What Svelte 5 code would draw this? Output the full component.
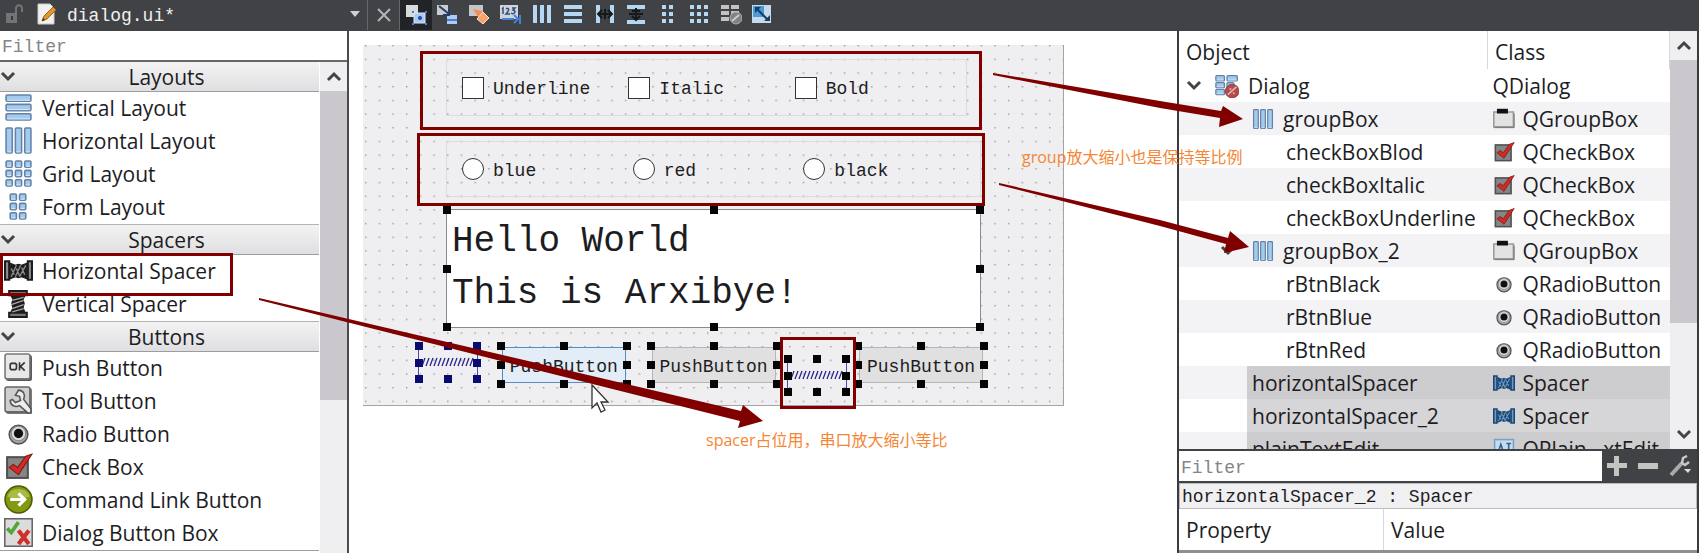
<script lang="ts">
  type Widget = { icon: string; label: string };
  type ObjectRow = {
    name: string;
    cls: string;
    level: number;
    icon?: string;
    clsIcon?: string;
    open?: boolean;
    selected?: boolean;
  };

  const tools = [
    "edit-widgets",
    "edit-signals",
    "edit-buddies",
    "edit-tabs",
    "hlayout",
    "vlayout",
    "hsplit",
    "vsplit",
    "form",
    "grid",
    "break",
    "adjust",
  ];

  const sections: { title: string; widgets: Widget[] }[] = [
    {
      title: "Layouts",
      widgets: [
        { icon: "vlayout", label: "Vertical Layout" },
        { icon: "hlayout", label: "Horizontal Layout" },
        { icon: "grid", label: "Grid Layout" },
        { icon: "form", label: "Form Layout" },
      ],
    },
    {
      title: "Spacers",
      widgets: [
        { icon: "hspacer", label: "Horizontal Spacer" },
        { icon: "vspacer", label: "Vertical Spacer" },
      ],
    },
    {
      title: "Buttons",
      widgets: [
        { icon: "push", label: "Push Button" },
        { icon: "tool", label: "Tool Button" },
        { icon: "radio", label: "Radio Button" },
        { icon: "check", label: "Check Box" },
        { icon: "command", label: "Command Link Button" },
        { icon: "dialogbox", label: "Dialog Button Box" },
      ],
    },
  ];

  const objects: ObjectRow[] = [
    { name: "Dialog", cls: "QDialog", level: 0, icon: "dialog", open: true },
    { name: "groupBox", cls: "QGroupBox", level: 1, icon: "hlayout", clsIcon: "group" },
    { name: "checkBoxBlod", cls: "QCheckBox", level: 2, clsIcon: "check" },
    { name: "checkBoxItalic", cls: "QCheckBox", level: 2, clsIcon: "check" },
    { name: "checkBoxUnderline", cls: "QCheckBox", level: 2, clsIcon: "check" },
    { name: "groupBox_2", cls: "QGroupBox", level: 1, icon: "hlayout", clsIcon: "group", open: true },
    { name: "rBtnBlack", cls: "QRadioButton", level: 2, clsIcon: "radio" },
    { name: "rBtnBlue", cls: "QRadioButton", level: 2, clsIcon: "radio" },
    { name: "rBtnRed", cls: "QRadioButton", level: 2, clsIcon: "radio" },
    { name: "horizontalSpacer", cls: "Spacer", level: 3, clsIcon: "bluespacer", selected: true },
    { name: "horizontalSpacer_2", cls: "Spacer", level: 3, clsIcon: "bluespacer", selected: true },
    { name: "plainTextEdit", cls: "QPlain...xtEdit", level: 3, clsIcon: "textedit", selected: true },
  ];

  const handles = ["nw", "n", "ne", "w", "e", "sw", "s", "se"];
  const text = "Hello World\nThis is Arxibye!";
</script>

{#snippet bars(rects: number[][])}
  {#each rects as [x, y, w, h]}
    <rect {x} {y} width={w} height={h} rx="1" fill="#a3cbef" stroke="#6482a5" stroke-width="1.5" />
    <path d="M{x + 1} {y + h - 1}h{w - 2}" stroke="#d5e8f8" />
  {/each}
{/snippet}

{#snippet icon(name: string)}
  <svg class="icon" viewBox="0 0 28 28" fill="none" aria-hidden="true">
    {#if name === "vlayout"}
      {@render bars([[2, 2, 24, 6], [2, 11, 24, 6], [2, 20, 24, 6]])}
    {:else if name === "hlayout"}
      {@render bars([[2, 2, 6, 24], [11, 2, 6, 24], [20, 2, 6, 24]])}
    {:else if name === "grid"}
      {@render bars([2, 11, 20].flatMap((y) => [2, 11, 20].map((x) => [x, y, 6, 6])))}
    {:else if name === "form"}
      {@render bars([2, 11, 20].flatMap((y) => [6, 15].map((x) => [x, y, 6, 6])))}
    {:else if name === "hspacer" || name === "bluespacer"}
      {@const dark = name === "hspacer" ? "#1c1c1c" : "#1d4673"}
      {@const light = name === "hspacer" ? "#8e8e8e" : "#6b9cc9"}
      <path d="M1 5h4v18H1zM23 5h4v18h-4z" fill={light} stroke={dark} stroke-width="2" />
      <path d="M6 7l5 2 3-1 3 1 5-2v15l-5-2-3 1-3-1-5 2z" fill={dark} stroke={dark} />
      <path d="M7 20l5-11M11 20l5-11M15 20l6-11M7 12l3 6M12 12l3 7M17 11l3 7" stroke={light} stroke-width="1.3" />
    {:else if name === "vspacer"}
      <path d="M5 2h17v4H5zM5 23h17v4H5z" fill="#777" stroke="#1c1c1c" stroke-width="2" />
      <path d="M6 6h15l-2 4 1 4-1 4 2 5H6l2-5-1-4 1-4z" fill="#1c1c1c" />
      <path d="M8 11l11-3M7 15l12-4M8 19l11-4M8 22l11-3" stroke="#aaa" stroke-width="1.3" />
    {:else if name === "push"}
      <rect x="2" y="2" width="25" height="25" rx="2" fill="#555" />
      <rect x="1" y="1" width="24" height="24" rx="2" fill="#e8e8e8" stroke="#777" stroke-width="1.5" />
      <path d="M7 10h4l1 1v4l-1 1H7l-1-1v-4zM15 9v8M20 9l-4 4 4 4" stroke="#333" stroke-width="1.6" />
    {:else if name === "tool"}
      <rect x="2" y="2" width="25" height="25" rx="2" fill="#777" />
      <rect x="1" y="1" width="24" height="24" rx="2" fill="#cfcfd1" stroke="#666" stroke-width="1.5" />
      <path
        d="M14 4c5 0 7 5 5 9l7 9v4h-3l-8-7c-4 2-9 0-9-5l2-1 3 3 5-2-1-4-4-1z"
        fill="#ededed"
        stroke="#555"
        stroke-width="1.5"
      />
    {:else if name === "radio"}
      <circle cx="14" cy="15" r="9" fill="#aaa" stroke="#555" stroke-width="1.5" />
      <circle cx="14" cy="14" r="7" fill="#ddd" stroke="#888" />
      <circle cx="14" cy="14" r="4.5" fill="#111" />
    {:else if name === "check"}
      <rect x="3" y="5" width="20" height="20" fill="#868686" stroke="#505050" stroke-width="2" />
      <path d="M5 15l4-3 4 3 8-11 6-2-13 20z" fill="#d22a24" stroke="#7d1916" />
    {:else if name === "command"}
      <circle cx="14" cy="14" r="13" fill="#83990f" stroke="#4b5a0b" stroke-width="1.5" />
      <path d="M3 11a12 12 0 0 1 22 0q-11 5-22 0z" fill="#a8bb45" />
      <path d="M6 14h14M14 8l6 6-6 6" stroke="#fff" stroke-width="3" />
    {:else if name === "dialogbox"}
      <rect x="0" y="0" width="28" height="28" fill="#dcdcdc" stroke="#666" stroke-width="3" />
      <path d="M3 10l4 4L14 4" stroke="#53a637" stroke-width="3.5" />
      <path d="M14 12l10 13M24 12l-10 13" stroke="#cf2f2d" stroke-width="4" />
    {:else if name === "group"}
      <path d="M1 5h25v19H1z" fill="#e2e2e2" stroke="#9a9a9a" stroke-width="2" />
      <path d="M2 25h25V7" stroke="#666" />
      <path d="M5 1h14v6H5z" fill="#111" />
    {:else if name === "textedit"}
      <rect x="2" y="2" width="24" height="24" fill="#c4dcf1" stroke="#7ca0c2" stroke-width="2" />
      <path d="M6 20l4-12 4 12M8 16h5M17 7h6M20 7v13M17 20h6" stroke="#35638f" stroke-width="2" />
    {:else if name === "dialog"}
      {@render bars([[1, 2, 10, 6], [14, 2, 12, 6], [1, 10, 10, 6], [1, 18, 10, 6], [14, 10, 8, 6]])}
      <circle cx="20" cy="20" r="8" fill="#b5494b" stroke="#8d3b3d" />
      <path d="M15 24l10-9M17 17l2 1M21 22l2 1" stroke="#e0b0b0" stroke-width="2" />
    {/if}
  </svg>
{/snippet}

{#snippet toolIcon(name: string)}
  <svg class="tool-icon" viewBox="0 0 22 22" fill="none" aria-hidden="true">
    {#if name === "edit-widgets"}
      <path d="M1 2h12v12H1z" fill="#d9dadc" />
      <path d="M9 10h11v10H9z" fill="#a9c8f3" stroke="#dbe8fa" />
      <circle cx="15" cy="15" r="2" fill="#1c49ae" />
      <path d="M7 8h2v2H7zM20 8h2v2h-2zM7 20h2v2H7zM20 20h2v2h-2z" fill="#4a7de0" />
    {:else if name === "edit-signals"}
      <path d="M1 2h11v10H1z" fill="#c9ccd0" />
      <path d="M11 12h10v9H11z" fill="#aecbf2" />
      <path d="M11 17h10" stroke="#4b80d0" stroke-width="2" />
      <path d="M3 3l10 8M13 6v6H7" stroke="#263f66" stroke-width="2" />
    {:else if name === "edit-buddies"}
      <path d="M1 2h14v11H1z" fill="#c6c6c8" />
      <path d="M5 6l9 2 1 5-5 1z" fill="#f28d55" />
      <path d="M15 9l6 6-6 6-6-5z" fill="#f7a46b" stroke="#ffe1c9" />
    {:else if name === "edit-tabs"}
      <path d="M1 2h18v14H1z" fill="#d0d4da" />
      <path d="M3 6l1-1v6M7 6c3-2 4 1 0 5h4M13 5h3l-2 2c4 1 1 5-2 3" stroke="#31507c" stroke-width="1.5" />
      <path d="M3 16h12M15 12l4 4-4 4M21 12v9" stroke="#4683d8" stroke-width="2" />
    {:else if name === "hlayout"}
      <path d="M2 2h4v18H2zM9 2h4v18H9zM16 2h4v18h-4z" fill="#b4d8f4" />
    {:else if name === "vlayout"}
      <path d="M2 2h18v4H2zM2 9h18v4H2zM2 16h18v4H2z" fill="#b4d8f4" />
    {:else if name === "hsplit"}
      <path d="M2 2h4v18H2zM16 2h4v18h-4z" fill="#b4d8f4" />
      <path d="M4 11h14M8 7l-4 4 4 4M14 7l4 4-4 4M11 6v10" stroke="#17181a" stroke-width="2" />
    {:else if name === "vsplit"}
      <path d="M2 2h18v4H2zM2 17h18v4H2z" fill="#b4d8f4" />
      <path d="M4 11h14M11 5v11M7 8h8M7 13l4 4 4-4" stroke="#17181a" stroke-width="2" />
    {:else if name === "form"}
      <path d="M5 2h4v4H5zM12 2h4v4h-4zM5 9h4v4H5zM12 9h4v4h-4zM5 16h4v4H5zM12 16h4v4h-4z" fill="#b4d8f4" />
    {:else if name === "grid"}
      <path
        d="M2 2h4v4H2zM9 2h4v4H9zM16 2h4v4h-4zM2 9h4v4H2zM9 9h4v4H9zM16 9h4v4h-4zM2 16h4v4H2zM9 16h4v4H9zM16 16h4v4h-4z"
        fill="#b4d8f4"
      />
    {:else if name === "break"}
      <path d="M1 2h8v4H1zM11 2h8v4h-8zM1 8h8v4H1zM11 8h8v4h-8zM1 14h8v4H1z" fill="#c2c2c2" />
      <circle cx="16" cy="15" r="6" fill="#828282" stroke="#b0b0b0" />
      <path d="M12 18l7-6" stroke="#ccc" stroke-width="2" />
    {:else}
      <path d="M1 2h19v18H1z" fill="#c6dcec" />
      <path d="M2 3h11v11H2z" fill="#4b9bd5" />
      <path d="M6 6l11 11" stroke="#183d66" stroke-width="2" />
      <path d="M4 4h6l-6 6zM19 18h-6l6-6z" fill="#183d66" />
    {/if}
  </svg>
{/snippet}

{#snippet chevron(up: boolean)}
  <svg class="chevron" viewBox="0 0 16 12" fill="none" aria-hidden="true">
    <path d={up ? "M2 9l6-6 6 6" : "M2 2l6 6 6-6"} stroke="#444" stroke-width="3" />
  </svg>
{/snippet}

{#snippet grips()}
  {#each handles as h}
    <span class="grip grip--{h}"></span>
  {/each}
{/snippet}

{#snippet spacer(blue: boolean)}
  <div class="spacer" class:spacer--blue={blue} class:spacer--low={!blue}>
    <svg viewBox="0 0 56 10" fill="none" aria-hidden="true">
      {#each Array(13) as _, i}
        <path d="M{i * 4 + 2} 9l3-8" stroke="#26268c" stroke-width="1.3" />
      {/each}
    </svg>
    {@render grips()}
  </div>
{/snippet}

<div class="designer">
  <header class="toolbar">
    <div class="toolbar__file">
      <svg width="18" height="20" viewBox="0 0 18 20" fill="none" aria-hidden="true">
        <path d="M0 9h11v10H0z" fill="#737376" />
        <path d="M10 9V5c0-5 6-5 6 0v3" stroke="#737376" stroke-width="2" />
        <path d="M5 12h2v4H5z" fill="#38393c" />
      </svg>
      <svg width="20" height="22" viewBox="0 0 20 22" fill="none" aria-hidden="true">
        <path d="M1 1h12l4 4v16H1z" fill="#f1f1ef" stroke="#c9c9c6" />
        <path d="M5 18l2-5 9-9 3 3-9 9z" fill="#e0952f" stroke="#a3651c" />
        <path d="M5 18l1-3 2 2z" fill="#333" />
      </svg>
      <select class="toolbar__select" aria-label="Open file">
        <option>dialog.ui*</option>
      </select>
      <svg width="10" height="6" viewBox="0 0 10 6" aria-hidden="true"><path d="M0 0h10L5 6z" fill="#d0d0d2" /></svg>
    </div>
    <button class="toolbar__close" aria-label="Close file">
      <svg width="14" height="14" viewBox="0 0 14 14"><path d="M1 1l12 12M13 1L1 13" stroke="#b5b5b7" stroke-width="2" /></svg>
    </button>
    <div class="toolbar__tools">
      {#each tools as tool, i}
        <button class="toolbar__tool" class:toolbar__tool--active={i === 0} aria-label={tool}>
          {@render toolIcon(tool)}
        </button>
      {/each}
    </div>
  </header>

  <main class="body">
    <aside class="widgets">
      <input class="filter" placeholder="Filter" aria-label="Filter widgets" />
      <div class="widgets__body">
        <div class="widgets__list">
          {#each sections as section}
            <h2 class="section">{@render chevron(false)}<span>{section.title}</span></h2>
            <ul>
              {#each section.widgets as widget}
                <li class="widget">{@render icon(widget.icon)}{widget.label}</li>
              {/each}
            </ul>
          {/each}
        </div>
        <div class="scroll">
          <span class="scroll__end">{@render chevron(true)}</span>
          <span class="scroll__thumb scroll__thumb--left"></span>
        </div>
      </div>
    </aside>

    <section class="canvas">
      <form class="form" onsubmit={(e) => e.preventDefault()}>
        <svg class="form__dots" aria-hidden="true">
          <defs>
            <pattern id="dots" width="13.68" height="13.68" patternUnits="userSpaceOnUse">
              <rect x="2" width="1.4" height="1.4" fill="#98989b" />
            </pattern>
          </defs>
          <rect width="100%" height="100%" fill="url(#dots)" />
        </svg>
        <div class="group group--checks">
          {#each ["Underline", "Italic", "Bold"] as label}
            <label><input type="checkbox" /><span>{label}</span></label>
          {/each}
        </div>
        <div class="group group--radios">
          {#each ["blue", "red", "black"] as label}
            <label><input type="radio" name="color" /><span>{label}</span></label>
          {/each}
        </div>
        <div class="edit">
          <textarea aria-label="Text" rows="2" spellcheck="false" value={text}></textarea>
          {@render grips()}
        </div>
        <div class="form__row">
          {@render spacer(true)}
          <div class="push push--hover"><button>PushButton</button>{@render grips()}</div>
          <div class="push"><button>PushButton</button>{@render grips()}</div>
          {@render spacer(false)}
          <div class="push"><button>PushButton</button>{@render grips()}</div>
        </div>
      </form>
    </section>

    <aside class="inspector">
      <div class="inspector__objects">
        <table class="objects">
          <thead>
            <tr><th>Object</th><th class="objects__class">Class</th></tr>
          </thead>
          <tbody>
            {#each objects as row}
              <tr class:selected={row.selected}>
                <td>
                  <div class="cell cell--level{row.level}">
                    {#if row.open}{@render chevron(false)}{/if}
                    {#if row.icon}{@render icon(row.icon)}{/if}
                    <span>{row.name}</span>
                  </div>
                </td>
                <td>
                  <div class="cell cell--class">
                    {#if row.clsIcon}{@render icon(row.clsIcon)}{/if}
                    <span>{row.cls}</span>
                  </div>
                </td>
              </tr>
            {/each}
          </tbody>
        </table>
        <div class="scroll">
          <span class="scroll__end">{@render chevron(true)}</span>
          <span class="scroll__thumb scroll__thumb--right"></span>
          <span class="scroll__end scroll__end--bottom">{@render chevron(false)}</span>
        </div>
      </div>
      <div class="inspector__filter">
        <input class="filter" placeholder="Filter" aria-label="Filter properties" />
        <button aria-label="Add property">
          <svg width="20" height="20" viewBox="0 0 20 20"><path d="M7 0h5v7h8v5h-8v8H7v-8H0V7h7z" fill="#c3c3c0" /></svg>
        </button>
        <button aria-label="Remove property">
          <svg width="20" height="20" viewBox="0 0 20 20"><path d="M0 7h20v6H0z" fill="#c3c3c0" /></svg>
        </button>
        <button aria-label="Configure">
          <svg width="22" height="22" viewBox="0 0 22 22" fill="none">
            <path d="M2 20L13 8" stroke="#a9a9a9" stroke-width="4" />
            <path d="M18 1l-4 2-1 5 3 2 4-3" stroke="#c9c9c9" stroke-width="2.5" />
            <path d="M15 14h7l-3 4z" fill="#ddd" />
          </svg>
        </button>
      </div>
      <p class="inspector__current">horizontalSpacer_2 : Spacer</p>
      <div class="inspector__props"><span>Property</span><span>Value</span></div>
    </aside>
  </main>

  <!-- Tutorial marks drawn over the window -->
  <svg class="marks" width="1699" height="553" fill="none" aria-hidden="true">
    <path
      d="M592 385v23l5-5 4 9 4-2-4-8h7z"
      fill="#fff"
      stroke="#333"
      stroke-width="1.3"
    />
    <g stroke="#800000" stroke-width="3">
      <path d="M1.5 254.5h230v40H1.5z" />
      <path d="M421.5 52.5h559v76h-559z" />
      <path d="M418.5 134.5h565v70h-565z" />
      <path d="M781.5 338.5h73v69h-73z" />
    </g>
    <g fill="#800000">
      <path d="M993 73l167 28 61 10 2-5 20 13-24 8 1-9-60-10-167-33z" />
      <path d="M999 183l161 37 68 18 2-7 19 16-25 6 2-9-66-18-161-41z" />
      <path d="M259 298l461 108 21 5 2-6 20 16-25 7 2-7-20-5L259 300z" />
    </g>
  </svg>
  <p class="note note--group">group放大缩小也是保持等比例</p>
  <p class="note note--spacer">spacer占位用，串口放大缩小等比</p>
</div>

<style>
  :global(body) {
    margin: 0;
  }

  .designer {
    --ui: "Open Sans", "Noto Sans", sans-serif;
    --mono: "Liberation Mono", monospace;
    --bar: #414246;
    position: relative;
    display: flex;
    flex-direction: column;
    height: 100vh;
    overflow: hidden;
    background: #fff;
    color: #1d1d1f;
    font: 21px/24px var(--ui);
  }

  .designer * {
    box-sizing: border-box;
  }

  h2,
  p,
  ul {
    margin: 0;
    padding: 0;
    font: inherit;
    list-style: none;
  }

  button,
  input,
  select,
  textarea {
    margin: 0;
    padding: 0;
    border: 0;
    border-radius: 0;
    background: none;
    color: inherit;
    font: 18px/22px var(--mono);
  }

  /* Toolbar */
  .toolbar {
    display: flex;
    flex: none;
    height: 31px;
    padding-bottom: 1px;
    background: var(--bar);
  }

  .toolbar__file {
    display: flex;
    align-items: center;
    width: 368px;
    padding: 0 7px 2px 6px;
    border-right: 1px solid #66676b;
  }

  .toolbar__file svg + svg {
    margin-left: 13px;
  }

  .toolbar__select {
    flex: 1;
    margin-left: 10px;
    padding-top: 3px;
    appearance: none;
    color: #f0f0f0;
  }

  .toolbar__close {
    display: grid;
    place-items: center;
    width: 32px;
    border-right: 1px solid #66676b;
  }

  .toolbar__tools {
    display: flex;
    width: 378px;
  }

  .toolbar__tool {
    display: grid;
    flex: 1;
    place-items: center;
    padding-bottom: 3px;
  }

  .toolbar__tool--active {
    background: #222327;
  }

  .tool-icon {
    width: 22px;
    height: 22px;
  }

  /* Panels */
  .body {
    display: flex;
    flex: 1;
    min-height: 0;
  }

  .widgets {
    display: flex;
    flex: none;
    flex-direction: column;
    width: 349px;
    border-right: 2px solid #4b4b4f;
  }

  .filter {
    flex: none;
    height: 29px;
    padding: 3px 2px 0;
    background: #fff;
  }

  .filter::placeholder {
    color: #858585;
    opacity: 1;
  }

  .widgets__body {
    display: flex;
    flex: 1;
    min-height: 0;
    border-top: 2px solid #68686b;
  }

  .widgets__list {
    flex: 1;
    margin-right: 1px;
    overflow: hidden;
  }

  .section {
    display: flex;
    align-items: center;
    height: 31px;
    border-top: 1px solid #b4b4b6;
    border-bottom: 1px solid #9d9d9f;
    background: linear-gradient(#f3f3f4, #dfdfe1);
  }

  .section:first-child {
    height: 30px;
    border-top: 0;
  }

  .section span {
    flex: 1;
    padding-right: 2px;
    text-align: center;
  }

  .widget {
    display: flex;
    align-items: center;
    gap: 9px;
    height: 33px;
    padding: 0 0 2px 4px;
  }

  .widgets__list ul:last-child {
    border-bottom: 1px solid #9d9d9f;
  }

  .icon {
    flex: none;
    width: 29px;
    height: 29px;
  }

  .chevron {
    flex: none;
    width: 16px;
    height: 12px;
  }

  .scroll {
    display: flex;
    flex: none;
    flex-direction: column;
    width: 27px;
    background: #efeef0;
  }

  .scroll__end {
    display: grid;
    place-items: center;
    height: 29px;
  }

  .scroll__end--bottom {
    margin-top: auto;
  }

  .scroll__thumb {
    background: #cac8cc;
  }

  .scroll__thumb--left {
    height: 63%;
  }

  .scroll__thumb--right {
    height: 63%;
  }

  /* Form being designed */
  .canvas {
    flex: 1;
    min-width: 0;
    padding: 14px 113px 0 14px;
  }

  .form {
    position: relative;
    display: flex;
    flex-direction: column;
    padding: 14px 82px 13px 83px;
    border-right: 1px solid #a4a4a6;
    border-bottom: 1px solid #a4a4a6;
    background: #efeef0;
    font: 18px/22px var(--mono);
  }

  .form__dots {
    position: absolute;
    inset: 0;
    width: 100%;
    height: 100%;
  }

  .group {
    position: relative;
    display: grid;
    grid-template-columns: repeat(3, 1fr);
    align-items: center;
    border: 1px solid #dcdcde;
  }

  .group--checks {
    height: 57px;
    margin: 0 14px 25px 0;
    padding: 0 5px 0 15px;
  }

  .group--radios {
    height: 56px;
    margin-bottom: 12px;
    padding: 0 6px 0 15px;
  }

  .group label {
    display: flex;
    align-items: center;
    gap: 9px;
  }

  .group label span {
    padding-top: 3px;
  }

  .group input {
    width: 22px;
    height: 22px;
    appearance: none;
    border: 1px solid #333;
    background: #fff;
  }

  .group input[type="radio"] {
    border-radius: 50%;
  }

  .edit {
    position: relative;
    margin-bottom: 18px;
    border: 1px solid #8b8b8d;
    background: #fff;
  }

  .edit textarea {
    display: block;
    width: 100%;
    height: 117px;
    padding: 6px 5px;
    outline: none;
    resize: none;
    overflow: hidden;
    font-size: 36px;
    line-height: 52px;
  }

  .form__row {
    position: relative;
    display: flex;
    align-items: flex-start;
    justify-content: space-between;
    height: 46px;
    margin: 0 -3px 0 -28px;
  }

  .push {
    position: relative;
    padding: 1px;
  }

  .push button {
    display: block;
    width: 124px;
    height: 36px;
    padding-top: 3px;
    border: 1px solid #b5b5b7;
    background: #e0e0e1;
  }

  .push--hover {
    margin: 0 13px 0 12px;
  }

  .push--hover button {
    border-color: #5b8cc0;
    background: #e2edf8;
  }

  .spacer {
    position: relative;
    width: 60px;
    height: 33px;
    border: solid #4c4ca8;
    border-width: 0 1px;
  }

  .spacer--low {
    align-self: flex-end;
  }

  .spacer svg {
    display: block;
    width: 56px;
    height: 10px;
    margin: 11px 1px;
  }

  .grip {
    position: absolute;
    width: 8px;
    height: 8px;
    margin: -4px;
    background: #050505;
  }

  .spacer--blue .grip {
    background: #0a0a70;
  }

  .grip--nw,
  .grip--n,
  .grip--ne {
    top: 0;
  }

  .grip--w,
  .grip--e {
    top: 50%;
  }

  .grip--sw,
  .grip--s,
  .grip--se {
    bottom: 0;
  }

  .grip--nw,
  .grip--w,
  .grip--sw {
    left: 0;
  }

  .grip--n,
  .grip--s {
    left: 50%;
  }

  .grip--ne,
  .grip--e,
  .grip--se {
    right: 0;
  }

  /* Object inspector */
  .inspector {
    display: flex;
    flex: none;
    flex-direction: column;
    width: 522px;
    border: solid #3b3b3f;
    border-width: 0 2px;
  }

  .inspector__objects {
    display: flex;
    flex: 1;
    min-height: 0;
    overflow: hidden;
  }

  .objects {
    flex: 1;
    align-self: flex-start;
    border-collapse: collapse;
    table-layout: fixed;
  }

  .objects th {
    height: 38px;
    padding: 3px 7px 0;
    font-weight: 400;
    text-align: left;
  }

  .objects .objects__class {
    width: 182px;
    border-left: 1px solid #d8d8da;
    border-right: 1px solid #d8d8da;
  }

  .objects td {
    padding: 0;
  }

  .objects tbody tr:nth-child(even) {
    background: #f3f2f5;
  }

  .cell {
    display: flex;
    align-items: center;
    gap: 9px;
    height: 33px;
    white-space: nowrap;
  }

  .cell .icon {
    width: 22px;
    height: 22px;
  }

  .cell--level0 {
    padding-left: 7px;
  }

  .cell--level0 .icon {
    width: 24px;
    height: 24px;
    margin-left: 4px;
  }

  .cell--level1 {
    padding-left: 73px;
  }

  .cell--level1:has(.chevron) {
    padding-left: 41px;
  }

  .cell--level1:has(.chevron) .icon {
    margin-left: 7px;
  }

  .cell--level2 {
    padding-left: 107px;
  }

  .cell--level3 {
    margin-left: 68px;
    padding-left: 5px;
  }

  .cell--class {
    padding-left: 5px;
  }

  .cell--class .icon {
    margin-right: -1px;
  }

  .selected .cell {
    background: #d6d5d7;
  }

  .selected:nth-child(even) .cell {
    background: #cdccce;
  }

  .inspector__filter {
    display: flex;
    flex: none;
    align-items: center;
    gap: 11px;
    padding: 2px 6px 2px 0;
    background: var(--bar);
  }

  .inspector__filter .filter {
    flex: 1;
    min-width: 0;
    height: 30px;
    margin-right: -6px;
  }

  .inspector__filter button {
    display: grid;
    place-items: center;
  }

  .inspector__current {
    height: 26px;
    padding: 1px 2px;
    border: 1px solid #bcbcbe;
    background: #f0eff1;
    font: 18px/24px var(--mono);
  }

  .inspector__props {
    display: grid;
    grid-template-columns: 204px 1fr;
    border-bottom: 3px solid #8f8f91;
  }

  .inspector__props span {
    padding: 9px 7px 8px;
  }

  .inspector__props span + span {
    border-left: 1px solid #d8d8da;
  }

  /* Marks */
  .marks {
    position: absolute;
    top: 0;
    left: 0;
    pointer-events: none;
  }

  .note {
    position: absolute;
    color: #f58634;
    font: 16px/24px "Open Sans", "Noto Sans CJK SC", sans-serif;
    white-space: nowrap;
  }

  .note--group {
    top: 145px;
    left: 1022px;
  }

  .note--spacer {
    top: 428px;
    left: 706px;
  }
</style>
